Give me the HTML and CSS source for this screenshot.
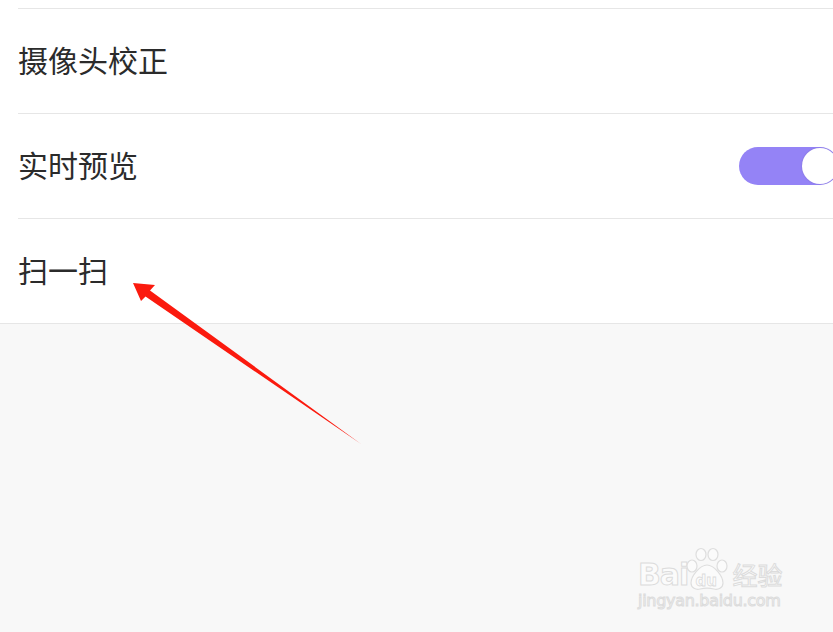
FILE: index.html
```html
<!DOCTYPE html>
<html lang="zh-CN">
<head>
    <meta charset="UTF-8">
    <title>设置</title>
    <link rel="stylesheet" href="styles.css">
</head>
<body>
    <ul class="settings-list">
        <li class="settings-row">
            <span class="row-label">摄像头校正</span>
        </li>
        <li class="settings-row">
            <span class="row-label">实时预览</span>
            <div class="toggle is-on"><div class="toggle-knob"></div></div>
        </li>
        <li class="settings-row">
            <span class="row-label">扫一扫</span>
        </li>
    </ul>

    <!-- annotation arrow drawn over the screenshot -->
    <svg class="arrow" width="833" height="632" viewBox="0 0 833 632">
        <polygon points="133,283 155,285 150,290.5 361,444 145.5,296.5 141,301" fill="#fb1a0e"/>
    </svg>

    <div class="watermark">
        <div class="watermark-top">
            <span class="wm-bai">Bai</span>
            <span class="wm-paw">
                <svg width="46" height="44" viewBox="0 0 46 44">
                    <g fill="#fbfbfb" stroke="#dedede" stroke-width="1.2">
                        <ellipse cx="8" cy="19" rx="5" ry="6"/>
                        <ellipse cx="17" cy="7.5" rx="5" ry="6"/>
                        <ellipse cx="29" cy="7.5" rx="5" ry="6"/>
                        <ellipse cx="38" cy="19" rx="5" ry="6"/>
                        <path d="M23 18c-7 0-16 11-16 18c0 5 5 7 9 6c4-1 10-1 14 0c4 1 9-1 9-6c0-7-9-18-16-18z"/>
                    </g>
                    <text x="11.5" y="39" class="wm-du">du</text>
                </svg>
            </span>
            <span class="wm-jy">经验</span>
        </div>
        <div class="watermark-url">jingyan.baidu.com</div>
    </div>
</body>
</html>
```

FILE: styles.css
```css
:root {
    --page-bg: #f8f8f8;
    --row-bg: #ffffff;
    --line-color: #e6e6e6;
    --text-color: #2b2b2b;
    --toggle-on: #9483f6;
}

* {
    box-sizing: border-box;
}

body {
    margin: 0;
    height: 632px;
    overflow: hidden;
    position: relative;
    background-color: var(--page-bg);
    font-family: "Noto Sans CJK SC", "Noto Sans", sans-serif;
    color: var(--text-color);
}

.settings-list {
    list-style: none;
    margin: 0;
    padding: 8px 0 0;
    background-color: var(--row-bg);
    border-bottom: 1px solid var(--line-color);
}

.settings-row {
    height: 105px;
    margin-left: 18px;
    border-top: 1px solid var(--line-color);
    display: flex;
    align-items: center;
    justify-content: space-between;
}

.row-label {
    font-size: 30px;
    line-height: 1;
    margin-bottom: 4px;
}

.toggle {
    width: 100px;
    height: 38px;
    border-radius: 19px;
    margin-right: -6px;
    background-color: #dcdcdc;
    position: relative;
}

.toggle.is-on {
    background-color: var(--toggle-on);
}

.toggle-knob {
    position: absolute;
    top: 1px;
    right: 1px;
    width: 36px;
    height: 36px;
    border-radius: 50%;
    background-color: #ffffff;
    box-shadow: 0 0 2px rgba(0, 0, 0, 0.15);
}

.arrow {
    position: absolute;
    top: 0;
    left: 0;
    pointer-events: none;
}

.watermark {
    position: absolute;
    left: 638px;
    top: 541px;
    width: 160px;
    font-family: "DejaVu Sans", sans-serif;
    color: #fbfbfb;
    -webkit-text-stroke: 1px #dcdcdc;
}

.watermark-top {
    display: flex;
    align-items: flex-end;
    height: 50px;
}

.wm-bai {
    font-size: 30px;
    font-weight: bold;
    line-height: 30px;
    letter-spacing: -1px;
    margin-bottom: 1px;
}

.wm-paw {
    display: block;
    margin-left: -4px;
    height: 44px;
}

.wm-du {
    font-family: "DejaVu Sans", sans-serif;
    font-size: 15px;
    font-weight: bold;
    fill: #fbfbfb;
    stroke: #dcdcdc;
    stroke-width: 0.8;
}

.wm-jy {
    font-family: "Noto Sans CJK SC", sans-serif;
    font-size: 25px;
    line-height: 28px;
    margin-left: 2px;
    margin-bottom: 3px;
}

.watermark-url {
    font-size: 16px;
    line-height: 20px;
    letter-spacing: -0.3px;
}
```
